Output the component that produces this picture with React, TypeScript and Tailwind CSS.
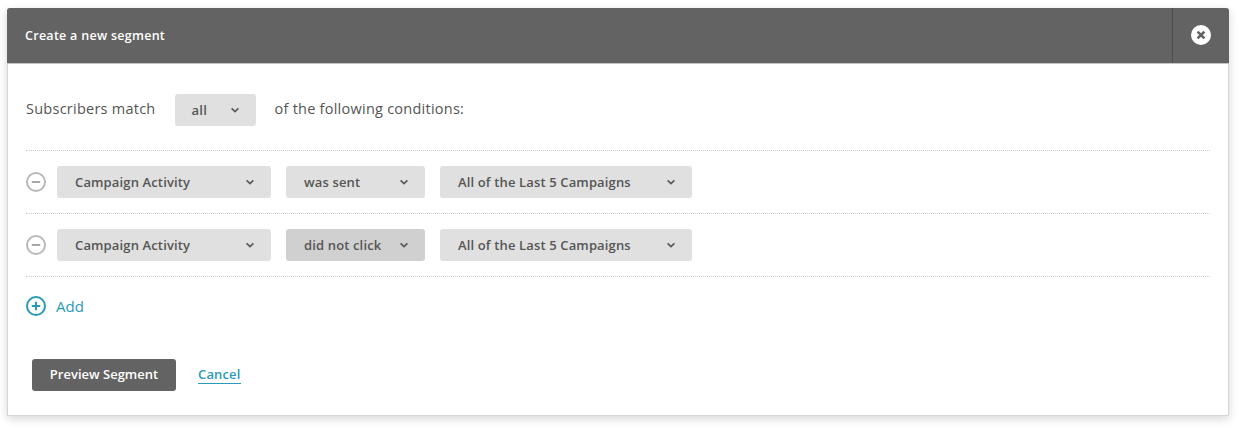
const font = "font-['Open_Sans',sans-serif]";

const Chevron = () => (
  <svg width="10" height="10" viewBox="0 0 10 10" className="shrink-0" fill="none" stroke="#59595a" strokeWidth="1.7">
    <path d="M1.6 3.4 5 6.6l3.4-3.2" />
  </svg>
);

const Select = ({ label, width, active }: { label: string; width: string; active?: boolean }) => (
  <div
    className={`flex h-8 items-center justify-between rounded-[3px] pl-[18px] pr-[16px] text-[13px] font-semibold tracking-[0.14px] text-[#555555] ${width} ${
      active ? 'bg-[#d0d0d0]' : 'bg-[#e0e0e0]'
    }`}
  >
    <span className="whitespace-nowrap pt-px">{label}</span>
    <Chevron />
  </div>
);

const RemoveIcon = () => (
  <svg width="20" height="20" viewBox="0 0 20 20" fill="none" className="shrink-0">
    <circle cx="10" cy="10" r="9" stroke="#b9b9b9" strokeWidth="2" />
    <path d="M5.8 10h8.4" stroke="#a8a8a8" strokeWidth="2" />
  </svg>
);

const Condition = ({ middle, active }: { middle: string; active?: boolean }) => (
  <div className="flex h-[63px] items-center border-b border-dotted border-[#d0d0d0]">
    <RemoveIcon />
    <div className="ml-[11px] flex gap-[15px]">
      <Select label="Campaign Activity" width="w-[214px]" />
      <Select label={middle} width="w-[139px]" active={active} />
      <Select label="All of the Last 5 Campaigns" width="w-[252px]" />
    </div>
  </div>
);

export default function App() {
  return (
    <div className={`h-[428px] w-[1239px] overflow-hidden bg-white pl-[7px] pt-2 ${font}`}>
      <div className="h-[408px] w-[1222px] rounded-t-[3px] border-x border-b border-[#d6d6d6] bg-white shadow-[0_3px_10px_rgba(0,0,0,0.16)]">
        <header className="-mx-px flex h-[56px] items-center justify-between rounded-t-[3px] border-b border-[#c4c4c4] bg-[#636363]">
          <h1 className="pl-[18px] pt-px text-[12.5px] font-semibold tracking-[0.28px] text-white">Create a new segment</h1>
          <div className="flex h-full w-[57px] items-center justify-center border-l border-[#4c4c4c] pb-px">
            <svg width="20" height="20" viewBox="0 0 20 20">
              <circle cx="10" cy="10" r="10" fill="#fff" />
              <path d="M6.6 6.6l6.8 6.8M13.4 6.6l-6.8 6.8" stroke="#636363" strokeWidth="2.6" />
            </svg>
          </div>
        </header>

        <div className="px-[18px]">
          <div className="flex h-[87px] items-start border-b border-dotted border-[#d0d0d0] pt-[30px] text-[14.5px] tracking-[0.25px] text-[#555555]">
            <span className="leading-[29px]">Subscribers match</span>
            <div className="ml-[19px] flex h-8 w-[81px] items-center justify-between rounded-[3px] bg-[#e0e0e0] pl-[17px] pr-[16px] text-[13px] font-semibold tracking-[0.3px] text-[#555555]">
              <span className="pt-px">all</span>
              <Chevron />
            </div>
            <span className="ml-[19px] leading-[29px]">of the following conditions:</span>
          </div>

          <Condition middle="was sent" />
          <Condition middle="did not click" active />

          <div className="mt-[18px] flex items-center">
            <svg width="20" height="20" viewBox="0 0 20 20" fill="none" className="shrink-0">
              <circle cx="10" cy="10" r="9" stroke="#2a9ab8" strokeWidth="2" />
              <path d="M5.8 10h8.4M10 5.8v8.4" stroke="#2a9ab8" strokeWidth="2" />
            </svg>
            <span className="ml-[10px] text-[15px] text-[#2a9ab8]">Add</span>
          </div>

          <div className="ml-[6px] mt-[41px] flex items-center">
            <button className="flex h-8 w-[144px] items-center justify-center rounded-[3px] bg-[#636363] pt-px text-[13px] font-semibold text-white">
              Preview Segment
            </button>
            <a className="ml-[22px] border-b border-[#2a9ab8] text-[13px] font-semibold leading-[17px] tracking-[0.15px] text-[#2a9ab8]">
              Cancel
            </a>
          </div>
        </div>
      </div>
    </div>
  );
}
